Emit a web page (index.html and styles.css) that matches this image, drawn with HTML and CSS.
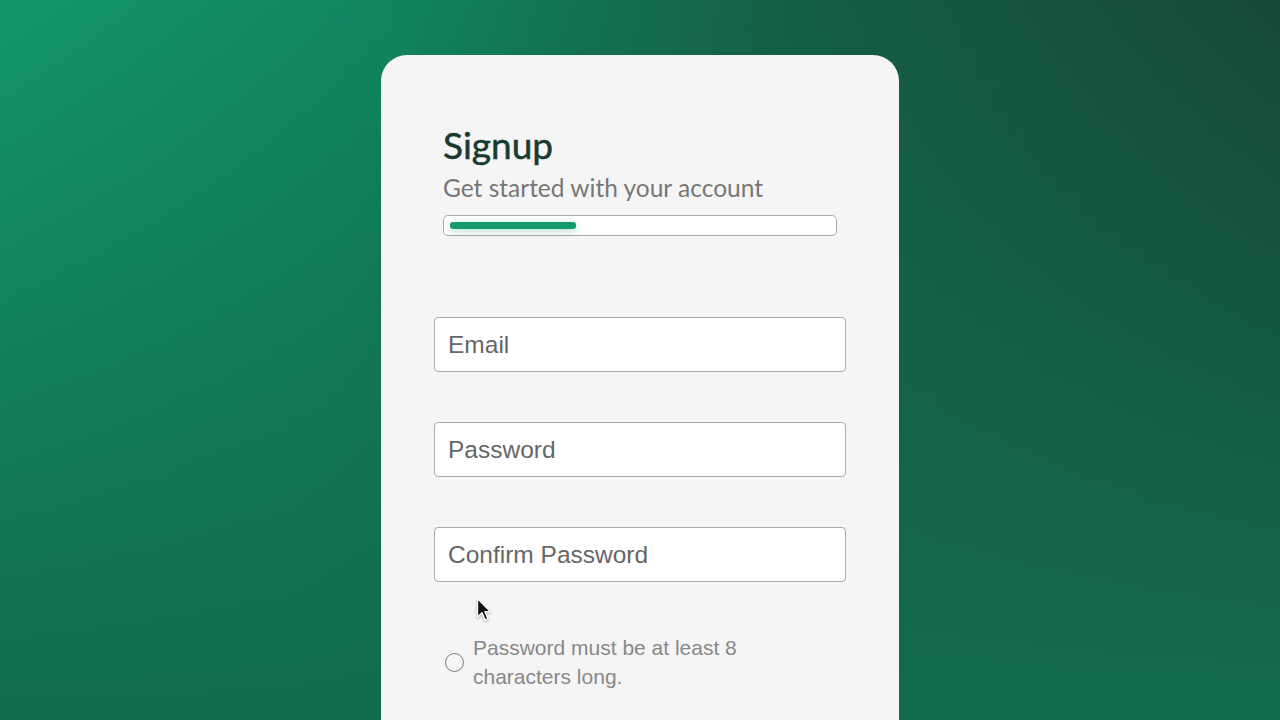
FILE: index.html
```html
<!DOCTYPE html>
<html lang="en">
<head>
    <meta charset="UTF-8">
    <meta name="viewport" content="width=device-width, initial-scale=1.0">
    <title>Signup</title>
    <link rel="stylesheet" href="styles.css">
</head>
<body>
    <div class="card">
        <div class="card-header">
            <h1 class="title">Signup</h1>
            <p class="subtitle">Get started with your account</p>
            <div class="progress">
                <div class="progress-fill"></div>
            </div>
        </div>
        <form class="signup-form">
            <input class="field" type="email" placeholder="Email">
            <input class="field" type="password" placeholder="Password">
            <input class="field" type="password" placeholder="Confirm Password">
            <ul class="rules">
                <li class="rule">
                    <span class="rule-dot"></span>
                    <span class="rule-text">Password must be at least 8 characters long.</span>
                </li>
            </ul>
        </form>
        <!-- mouse pointer captured in the recording -->
        <svg class="pointer" width="16" height="26" viewBox="0 0 16 26">
            <path d="M1.5 1.5 L1.5 20 L6 15.8 L9.2 23 L12 21.8 L8.9 14.8 L14.6 14.8 Z" fill="#111" stroke="#fff" stroke-width="1.4" stroke-linejoin="round"/>
        </svg>
    </div>
</body>
</html>
```

FILE: styles.css
```css
html, body {
    height: 100%;
}
body {
    margin: 0;
    overflow: hidden;
    background:
        linear-gradient(to bottom, rgba(18, 108, 79, 0) 0%, rgba(18, 108, 79, 0.5) 50%, #126c4f 100%),
        linear-gradient(100deg, #13966b 0%, #11845f 28%, #145e47 56%, #164436 100%);
    display: flex;
    justify-content: center;
    align-items: flex-start;
}
.card {
    position: relative;
    box-sizing: border-box;
    width: 518px;
    margin-top: 55px;
    min-height: 720px;
    background-color: #f5f5f5;
    border-radius: 26px;
    padding: 70px 53px 0 53px;
}
.card-header {
    padding: 0 9px;
}
.title {
    margin: 0;
    font-family: Lato, "Open Sans", sans-serif;
    font-weight: 400;
    font-size: 37px;
    line-height: 40px;
    color: #183b2f;
    -webkit-text-stroke: 0.5px #183b2f;
}
.subtitle {
    margin: 8px 0 0;
    font-family: Lato, "Open Sans", sans-serif;
    font-size: 24.5px;
    line-height: 30px;
    color: #777;
}
.progress {
    box-sizing: border-box;
    width: 394px;
    height: 21px;
    margin-top: 12px;
    padding: 6px;
    background-color: #fff;
    border: 1px solid #aaa;
    border-radius: 5px;
}
.progress-fill {
    width: 126px;
    height: 7px;
    border-radius: 3px;
    background-color: #149a6b;
    box-shadow: 0 2px 8px rgba(20, 154, 107, 0.35);
}
.signup-form {
    display: flex;
    flex-direction: column;
    gap: 50px;
    margin-top: 81px;
}
.field {
    box-sizing: border-box;
    width: 412px;
    height: 55px;
    padding: 0 13px;
    background-color: #fff;
    border: 1px solid #a9a9a9;
    border-radius: 4px;
    font-family: "Liberation Sans", Arial, sans-serif;
    font-size: 24.5px;
    color: #333;
    outline: none;
}
.field::placeholder {
    color: #666;
}
.rules {
    list-style: none;
    margin: 0;
    padding: 0 0 0 11px;
}
.signup-form .rules {
    margin-top: 1px;
}
.rule {
    display: flex;
    align-items: center;
    gap: 9px;
}
.rule-dot {
    box-sizing: border-box;
    flex: none;
    width: 19px;
    height: 19px;
    border: 1.5px solid #7a7a7a;
    border-radius: 50%;
}
.rule-text {
    max-width: 300px;
    font-family: "Liberation Sans", Arial, sans-serif;
    font-size: 21px;
    line-height: 29px;
    color: #888;
}
.pointer {
    position: absolute;
    left: 95px;
    top: 542px;
    filter: drop-shadow(0 1px 1px rgba(0, 0, 0, 0.3));
}
```
